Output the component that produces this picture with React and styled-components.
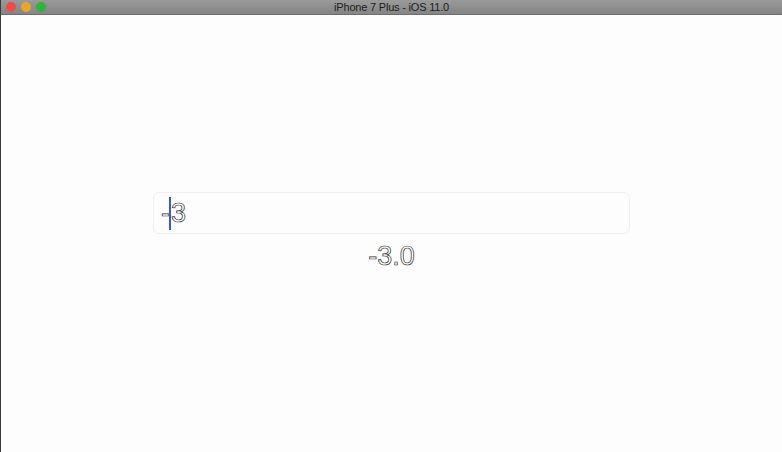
import React from "react";
import styled, { createGlobalStyle } from "styled-components";

const GlobalStyle = createGlobalStyle`
  html, body {
    margin: 0;
    padding: 0;
    background: #fdfdfd;
  }
  body {
    font-family: "Liberation Sans", Arial, sans-serif;
  }
`;

const Window = styled.div`
  width: 782px;
  height: 452px;
  display: flex;
  flex-direction: column;
  background: #fdfdfd;
  border-left: 1px solid #3a3a3a;
  box-sizing: border-box;
  overflow: hidden;
`;

const TitleBar = styled.div`
  height: 14px;
  flex-shrink: 0;
  position: relative;
  display: flex;
  align-items: center;
  justify-content: center;
  background: linear-gradient(#9a9a9a, #848484);
  border-bottom: 1px solid #6e6e6e;
`;

const Lights = styled.div`
  position: absolute;
  left: 5px;
  top: 2px;
  display: flex;
  gap: 5px;
`;

const Light = styled.span`
  width: 10px;
  height: 10px;
  border-radius: 50%;
  background: ${(p) => p.color};
`;

const Title = styled.span`
  font-size: 11px;
  color: #1e1e1e;
  letter-spacing: -0.2px;
`;

const Screen = styled.div`
  flex: 1;
  display: flex;
  flex-direction: column;
  align-items: center;
  padding-top: 177px;
`;

const Field = styled.div`
  width: 477px;
  height: 42px;
  box-sizing: border-box;
  border: 1.5px solid #f0f0f0;
  border-radius: 6px;
  display: flex;
  align-items: center;
  padding-left: 7px;
`;

const Outlined = styled.span`
  font-family: "Liberation Sans", Arial, sans-serif;
  font-size: 27px;
  font-weight: 300;
  color: #ffffff;
  -webkit-text-stroke: 0.7px #2a2a2a;
`;

const Caret = styled.span`
  display: inline-block;
  width: 2px;
  height: 33px;
  background: #3b55d8;
  margin: 0 0 0 -1px;
  vertical-align: middle;
`;

const Result = styled(Outlined)`
  margin-top: 6px;
  line-height: 32px;
`;

export default function App() {
  return (
    <>
      <GlobalStyle />
      <Window>
        <TitleBar>
          <Lights>
            <Light color="#ee4b4b" />
            <Light color="#e9a62a" />
            <Light color="#2eb53a" />
          </Lights>
          <Title>iPhone 7 Plus - iOS 11.0</Title>
        </TitleBar>
        <Screen>
          <Field>
            <Outlined>-</Outlined>
            <Caret />
            <Outlined>3</Outlined>
          </Field>
          <Result>-3.0</Result>
        </Screen>
      </Window>
    </>
  );
}
